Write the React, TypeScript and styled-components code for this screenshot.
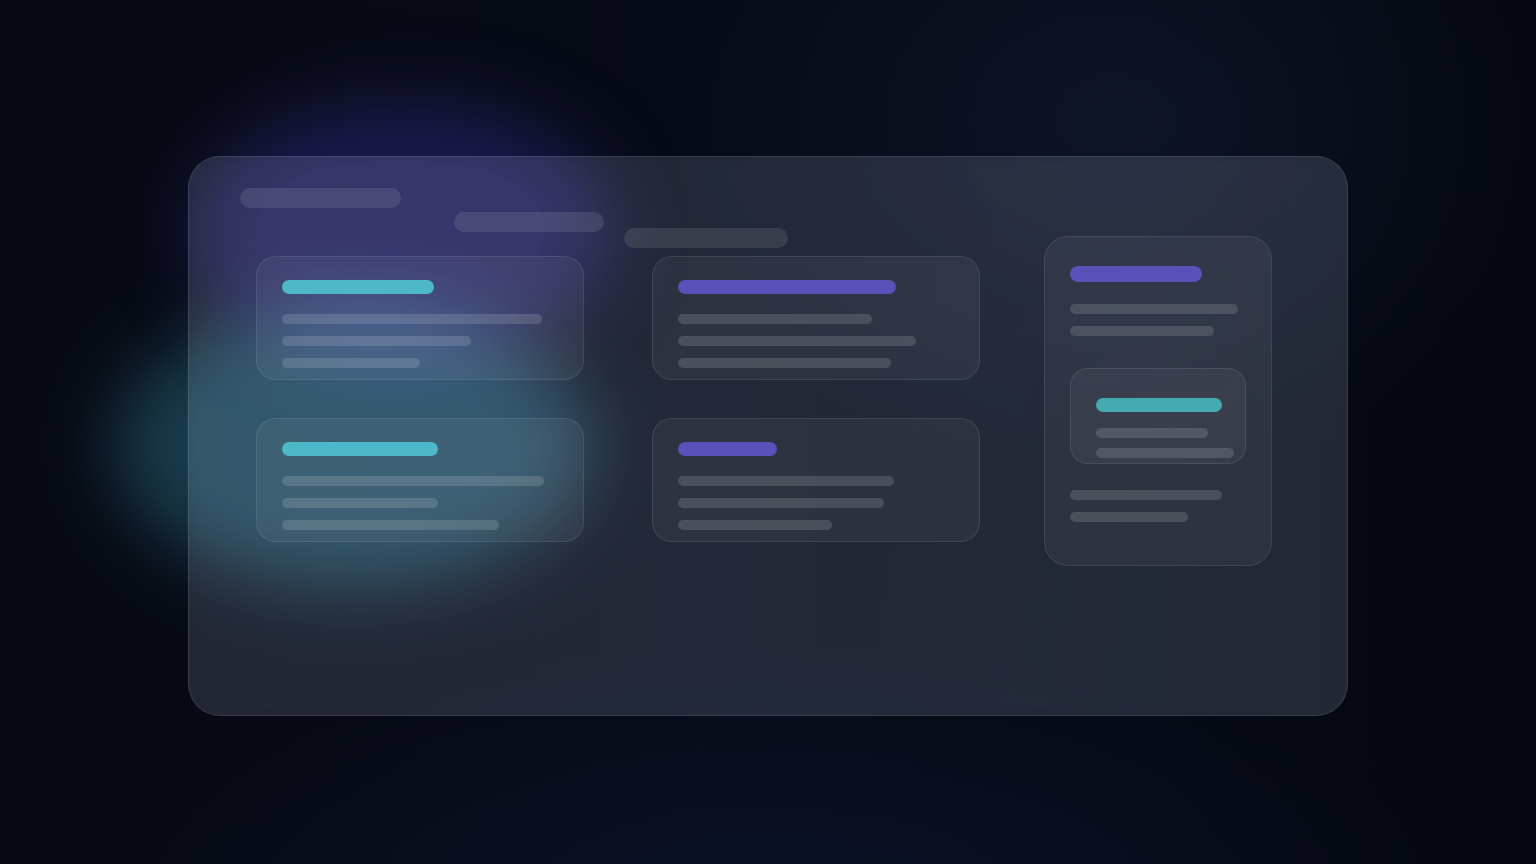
import React from "react";
import styled, { createGlobalStyle } from "styled-components";

const GlobalStyle = createGlobalStyle`
  html, body {
    margin: 0;
    padding: 0;
    background: #05080f;
    font-family: Inter, "Noto Sans", sans-serif;
  }
`;

const Stage = styled.div`
  position: relative;
  isolation: isolate;
  width: 100%;
  height: 864px;
  overflow: hidden;
  box-sizing: border-box;
  padding-top: 156px;
  display: flex;
  justify-content: center;
  align-items: flex-start;
  background:
    radial-gradient(ellipse 620px 480px at 1120px 120px, rgba(20, 30, 52, 0.5), transparent 72%),
    radial-gradient(ellipse 900px 320px at 780px 900px, rgba(14, 24, 52, 0.55), transparent 75%),
    linear-gradient(90deg, #060912 0%, #070b17 45%, #060a15 75%, #04070f 100%);
`;

const Blob = styled.div<{ $left: number; $top: number; $w: number; $h: number; $color: string; $screen?: boolean }>`
  position: absolute;
  left: ${(p) => p.$left}px;
  top: ${(p) => p.$top}px;
  width: ${(p) => p.$w}px;
  height: ${(p) => p.$h}px;
  border-radius: 50%;
  background: ${(p) => p.$color};
  filter: blur(36px);
  mix-blend-mode: ${(p) => (p.$screen ? "screen" : "normal")};
  z-index: 0;
`;

const Panel = styled.div`
  position: relative;
  z-index: 1;
  width: 1160px;
  height: 560px;
  box-sizing: border-box;
  padding: 31px 51px;
  border-radius: 32px;
  border: 1px solid rgba(255, 255, 255, 0.1);
  background: linear-gradient(
    100deg,
    rgba(200, 210, 235, 0.14) 0%,
    rgba(200, 210, 235, 0.14) 60%,
    rgba(205, 218, 240, 0.15) 100%
  );
  backdrop-filter: blur(4px) brightness(1.15);
`;

const Header = styled.div`
  display: flex;
  align-items: flex-start;
  height: 60px;
`;

const Pill = styled.div<{ $w: number; $ml?: number; $mt?: number }>`
  width: ${(p) => p.$w}px;
  height: 20px;
  border-radius: 10px;
  margin-left: ${(p) => p.$ml ?? 0}px;
  margin-top: ${(p) => p.$mt ?? 0}px;
  background: rgba(255, 255, 255, 0.1);
  flex: none;
`;

const Body = styled.div`
  display: flex;
  align-items: flex-start;
  margin-top: 8px;
  padding-left: 16px;
`;

const Column = styled.div<{ $w: number; $ml?: number }>`
  display: flex;
  flex-direction: column;
  gap: 38px;
  width: ${(p) => p.$w}px;
  margin-left: ${(p) => p.$ml ?? 0}px;
  flex: none;
`;

const Card = styled.div`
  height: 124px;
  box-sizing: border-box;
  padding: 23px 25px;
  border-radius: 20px;
  border: 1px solid rgba(255, 255, 255, 0.09);
  background: rgba(255, 255, 255, 0.05);
`;

const TallCard = styled.div`
  width: 228px;
  height: 330px;
  margin-top: -20px;
  margin-left: 64px;
  box-sizing: border-box;
  padding: 29px 25px;
  border-radius: 24px;
  border: 1px solid rgba(255, 255, 255, 0.09);
  background: rgba(255, 255, 255, 0.05);
  flex: none;
`;

const InnerCard = styled.div`
  height: 96px;
  box-sizing: border-box;
  margin-top: 32px;
  padding: 29px 25px 0;
  border-radius: 18px;
  border: 1px solid rgba(255, 255, 255, 0.09);
  background: rgba(255, 255, 255, 0.05);
`;

const TitleBar = styled.div<{ $w: number; $color: string; $h?: number }>`
  width: ${(p) => p.$w}px;
  height: ${(p) => p.$h ?? 14}px;
  border-radius: ${(p) => (p.$h ?? 14) / 2}px;
  background: ${(p) => p.$color};
`;

const Lines = styled.div<{ $mt: number; $gap: number }>`
  display: flex;
  flex-direction: column;
  gap: ${(p) => p.$gap}px;
  margin-top: ${(p) => p.$mt}px;
`;

const Line = styled.div<{ $w: number }>`
  width: ${(p) => p.$w}px;
  height: 10px;
  border-radius: 5px;
  background: rgba(255, 255, 255, 0.14);
`;

const TEAL = "#4db8c8";
const PURPLE = "#5a50b8";

type CardData = { title: number; color: string; lines: number[] };

const col1: CardData[] = [
  { title: 152, color: TEAL, lines: [260, 189, 138] },
  { title: 156, color: TEAL, lines: [262, 156, 217] },
];
const col2: CardData[] = [
  { title: 218, color: PURPLE, lines: [194, 238, 213] },
  { title: 99, color: PURPLE, lines: [216, 206, 154] },
];

function SkeletonCard({ data }: { data: CardData }) {
  return (
    <Card>
      <TitleBar $w={data.title} $color={data.color} />
      <Lines $mt={20} $gap={12}>
        {data.lines.map((w, i) => (
          <Line key={i} $w={w} />
        ))}
      </Lines>
    </Card>
  );
}

export default function App() {
  return (
    <>
      <GlobalStyle />
      <Stage>
        <Blob $left={190} $top={100} $w={420} $h={262} $color="rgb(27, 25, 76)" />
        <Blob $left={112} $top={305} $w={478} $h={282} $color="rgb(18, 52, 62)" $screen />
        <Panel>
          <Header>
            <Pill $w={161} />
            <Pill $w={150} $ml={53} $mt={24} />
            <Pill $w={164} $ml={20} $mt={40} />
          </Header>
          <Body>
            <Column $w={328}>
              {col1.map((c, i) => (
                <SkeletonCard key={i} data={c} />
              ))}
            </Column>
            <Column $w={328} $ml={68}>
              {col2.map((c, i) => (
                <SkeletonCard key={i} data={c} />
              ))}
            </Column>
            <TallCard>
              <TitleBar $w={132} $h={16} $color={PURPLE} />
              <Lines $mt={22} $gap={12}>
                <Line $w={168} />
                <Line $w={144} />
              </Lines>
              <InnerCard>
                <TitleBar $w={126} $color="#46aab2" />
                <Lines $mt={16} $gap={10}>
                  <Line $w={112} />
                  <Line $w={138} />
                </Lines>
              </InnerCard>
              <Lines $mt={26} $gap={12}>
                <Line $w={152} />
                <Line $w={118} />
              </Lines>
            </TallCard>
          </Body>
        </Panel>
      </Stage>
    </>
  );
}
